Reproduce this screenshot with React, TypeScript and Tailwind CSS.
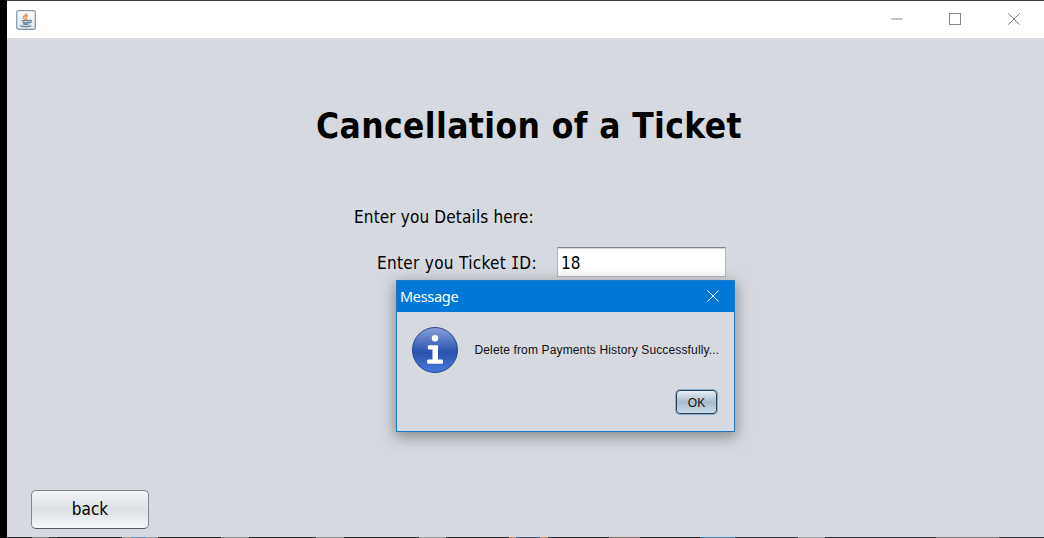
import { Minus } from "lucide-react";

function JavaIcon() {
  return (
    <svg width="20" height="20" viewBox="0 0 20 20" fill="none">
      <defs>
        <linearGradient id="tile" x1="0" y1="0" x2="0" y2="1">
          <stop offset="0" stopColor="#fdfdfd" />
          <stop offset="1" stopColor="#dfe5ea" />
        </linearGradient>
      </defs>
      <rect x="0.7" y="0.7" width="18.6" height="18.6" rx="2" fill="url(#tile)" stroke="#8597a6" strokeWidth="1.2" />
      <path d="M10.4 3c.8 2-3.400 2.900-3 4.700.1.8 1.400 1.400 1.800 2.200M12 5.500c-1.900.6-2.600 1.500-1.700 2.400.7.8.3 1.400-.3 1.900" stroke="#e0975f" strokeWidth="1.500" />
      <path d="M5.600 10.600h8M6.300 12.200c2 .8 5 .8 7 0M7 13.900c1.700.6 4 .6 5.500 0M13.600 10.400c2.600-.5 2.100 2.300-.4 2.600M4.300 15.700c2.500 1.300 8.700 1.200 10.900-.1" stroke="#63839b" strokeWidth="1.300" />
    </svg>
  );
}

function Cross({ size, className }: { size: number; className: string }) {
  return (
    <svg width={size} height={size} viewBox="0 0 12 12" className={className}>
      <path d="M.4.4l11.200 11.200M11.600.4L.4 11.600" stroke="currentColor" strokeWidth="1" />
    </svg>
  );
}

function InfoIcon() {
  return (
    <svg width="48" height="48" viewBox="0 0 48 48" className="shrink-0">
      <defs>
        <linearGradient id="ball" x1="0" y1="0" x2="0" y2="1">
          <stop offset="0" stopColor="#86a0d8" />
          <stop offset="0.450" stopColor="#3c61b7" />
          <stop offset="0.550" stopColor="#2b52ae" />
          <stop offset="1" stopColor="#4778dc" />
        </linearGradient>
      </defs>
      <circle cx="24" cy="24" r="22.500" fill="url(#ball)" stroke="#27458f" />
      <circle cx="24" cy="12.200" r="3.200" fill="#fff" />
      <path d="M18 19.200h9v14.400h3.600q1.400 0 1.400 1.400v1.400q0 1.400-1.400 1.400H17.500q-1.400 0-1.400-1.400V35q0-1.400 1.400-1.400h4V23.400H18q-1.200 0-1.200-1.200v-1.800q0-1.200 1.200-1.200z" fill="#fff" />
    </svg>
  );
}

function TitleBar() {
  return (
    <header className="flex h-[38px] shrink-0 items-center border-t border-[#3b3b3b] bg-white pl-[9px] text-[#858585]">
      <JavaIcon />
      <div className="-mt-px ml-auto flex items-center">
        <div className="flex w-[58px] justify-center">
          <Minus size={18} strokeWidth={1.400} />
        </div>
        <div className="flex w-[58px] justify-center">
          <div className="size-3 border border-[#858585]" />
        </div>
        <div className="flex w-[60px] justify-center">
          <Cross size={12} className="text-[#777]" />
        </div>
      </div>
    </header>
  );
}

function MessageDialog() {
  return (
    <section className="absolute left-[396px] top-[280px] flex h-[152px] w-[339px] flex-col border border-[#1c7ac9] bg-[#d6d9df] shadow-[0_4px_14px_1px_rgba(0,0,0,0.38)]">
      <div className="flex h-[31px] items-center justify-between bg-[#0078d7] pb-px pl-[3px] pr-[15px] text-white">
        <span className="pt-px font-['Noto_Sans',sans-serif] text-[14.500px] leading-none tracking-[-0.300px]">Message</span>
        <Cross size={12} className="text-white" />
      </div>
      <div className="flex items-center gap-[15.500px] pl-[14px] pt-[14px]">
        <InfoIcon />
        <p className="whitespace-nowrap font-['Liberation_Sans',sans-serif] text-[12px] leading-none tracking-[0.140px] text-[#111]">
          Delete from Payments History Successfully...
        </p>
      </div>
      <div className="flex justify-end pr-[17px] pt-[16px]">
        <button className="h-[24px] w-[41px] rounded-[4px] border border-[#27445e] bg-linear-to-b from-[#e8eff4] via-[#a9bccb] to-[#c9dbe8] pt-px font-['Liberation_Sans',sans-serif] text-[12px] leading-none text-[#111] shadow-[0_0_0_1px_#86a9c5]">
          OK
        </button>
      </div>
    </section>
  );
}

const strip = [
  [25, "#292a30"], [17, "#77797f"], [8, "#44464c"], [65, "#292a30"], [9, "#999ba0"], [15, "#5b90c2"], [12, "#999ba0"],
  [63, "#292a30"], [28, "#8a8c92"], [67, "#292a30"], [28, "#8a8c92"], [75, "#292a30"], [27, "#999ba0"], [63, "#292a30"],
  [7, "#b98d73"], [24, "#42546f"], [8, "#b98d73"], [61, "#292a30"], [31, "#756e65"], [60, "#292a30"], [35, "#397eb4"],
  [63, "#34343c"], [27, "#a9abb0"], [111, "#34343c"], [63, "#77777b"], [52, "#34343c"],
] as const;

export default function App() {
  return (
    <div className="relative flex h-[538px] w-[1044px] overflow-hidden bg-black pl-[7px] text-black">
      <div className="flex min-w-0 flex-1 flex-col bg-[#d6d9df]">
        <TitleBar />
        <main className="flex min-h-0 flex-1 flex-col font-['DejaVu_Sans_Condensed','DejaVu_Sans',sans-serif]">
          <h1 className="ml-[309px] mt-[67px] w-fit whitespace-nowrap text-[35px] font-bold leading-[42px] tracking-[0.400px] [font-stretch:condensed]">
            Cancellation of a Ticket
          </h1>
          <p className="ml-[347px] mt-[58px] w-fit whitespace-nowrap text-[17px] leading-6 tracking-[0.150px] [font-stretch:condensed]">
            Enter you Details here:
          </p>
          <div className="ml-[370px] mt-[18px] flex h-[30px] items-center">
            <label className="w-[180px] whitespace-nowrap pt-px text-[17px] leading-6 tracking-[0.320px] [font-stretch:condensed]">
              Enter you Ticket{" "}
              <span className="inline-block w-[8px] origin-left scale-x-[0.800] font-['DejaVu_Sans_Mono',monospace] tracking-normal">I</span>D:
            </label>
            <input
              className="h-[30px] w-[169px] border border-[#b6b8bd] border-t-[#83858a] bg-white px-[3px] pt-px text-[17px] shadow-[inset_0_1px_1px_#d8d8d8] outline-none [font-stretch:condensed]"
              defaultValue="18"
            />
          </div>
          <button className="mb-[8px] ml-[24px] mt-auto h-[39px] w-[118px] rounded-[5px] border border-[#85888e] border-b-[#505866] bg-linear-to-b from-[#f4f5f7] via-[#dce0e5] to-[#f4f6fa] pt-px text-[17px] [font-stretch:condensed]">
            back
          </button>
          <div className="flex h-px shrink-0">
            {strip.map(([width, color], i) => (
              <span key={i} className="shrink-0" style={{ width, backgroundColor: color }} />
            ))}
          </div>
        </main>
      </div>
      <MessageDialog />
    </div>
  );
}
